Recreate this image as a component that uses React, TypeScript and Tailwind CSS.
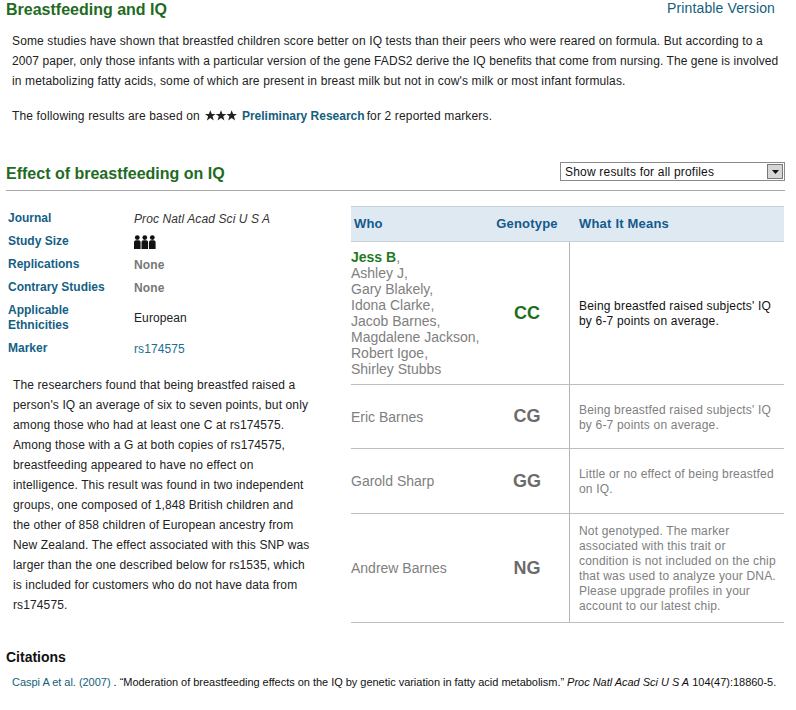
const font = "font-['Liberation_Sans',Arial,sans-serif]";

const details = [
  { label: ['Journal'], value: <span className="italic text-[#333333]">Proc Natl Acad Sci U S A</span>, h: 'h-[23px]' },
  { label: ['Study Size'], value: <People />, h: 'h-[23px]' },
  { label: ['Replications'], value: <span className="font-bold text-[#777777]">None</span>, h: 'h-[23px]' },
  { label: ['Contrary Studies'], value: <span className="font-bold text-[#777777]">None</span>, h: 'h-[23px]' },
  { label: ['Applicable', 'Ethnicities'], value: <span className="text-[#222222]">European</span>, h: 'h-[38px]' },
  { label: ['Marker'], value: <span className="text-[#1b6f8f]">rs174575</span>, h: 'h-[23px]' },
];

const rows = [
  {
    names: ['Ashley J,', 'Gary Blakely,', 'Idona Clarke,', 'Jacob Barnes,', 'Magdalene Jackson,', 'Robert Igoe,', 'Shirley Stubbs'],
    genotype: 'CC',
    meaning: ["Being breastfed raised subjects' IQ", 'by 6-7 points on average.'],
    h: 'h-[143px]',
    active: true,
  },
  { names: ['Eric Barnes'], genotype: 'CG', meaning: ["Being breastfed raised subjects' IQ", 'by 6-7 points on average.'], h: 'h-[64px]' },
  { names: ['Garold Sharp'], genotype: 'GG', meaning: ['Little or no effect of being breastfed', 'on IQ.'], h: 'h-[65px]' },
  {
    names: ['Andrew Barnes'],
    genotype: 'NG',
    meaning: ['Not genotyped. The marker', 'associated with this trait or', 'condition is not included on the chip', 'that was used to analyze your DNA.', 'Please upgrade profiles in your', 'account to our latest chip.'],
    h: 'h-[109px]',
  },
];

function People() {
  return (
    <svg width="22" height="14" viewBox="0 0 22 14" fill="#111111" className="block">
      {[0, 7.5, 15].map((x) => (
        <g key={x} transform={`translate(${x} 0)`}>
          <circle cx="3.3" cy="2.6" r="2.4" />
          <path d="M0 14V7.5C0 6 1 5.3 2 5.3h2.6c1 0 2 .7 2 2.2V14z" />
        </g>
      ))}
    </svg>
  );
}

function Stars() {
  return (
    <svg width="32" height="11" viewBox="0 0 33 11" fill="#222222" className="mx-[5px] -mt-[2px] block">
      {[0, 11, 22].map((x) => (
        <polygon key={x} transform={`translate(${x} 0)`} points="5.5,0 7,3.9 11,3.9 7.8,6.4 9,10.6 5.5,8 2,10.6 3.2,6.4 0,3.9 4,3.9" />
      ))}
    </svg>
  );
}

export default function App() {
  return (
    <div className={`${font} h-[710px] w-[796px] overflow-hidden bg-white text-[12px] text-[#222222]`}>
      <div className="flex h-[20px] items-start justify-between pt-px pl-[6px] pr-[21px]">
        <h1 className="text-[16px] leading-[18px] font-bold text-[#1f6b1f]">Breastfeeding and IQ</h1>
        <a className="-mt-px text-[14px] leading-[17px] tracking-[0.12px] text-[#14607c]">Printable Version</a>
      </div>

      <div className="pt-[11px] pl-[12px] text-[12px] leading-[20px]">
        <p className="tracking-[0.13px] whitespace-nowrap">Some studies have shown that breastfed children score better on IQ tests than their peers who were reared on formula. But according to a</p>
        <p className="tracking-[0.085px] whitespace-nowrap">2007 paper, only those infants with a particular version of the gene FADS2 derive the IQ benefits that come from nursing. The gene is involved</p>
        <p className="tracking-[0.135px] whitespace-nowrap">in metabolizing fatty acids, some of which are present in breast milk but not in cow's milk or most infant formulas.</p>
        <p className="mt-[15px] flex items-center tracking-[0.15px] whitespace-nowrap">
          The following results are based on
          <Stars />
          <a className="font-bold tracking-normal text-[#14607c]">Preliminary Research</a>
          <span className="ml-[2px]">for 2 reported markers.</span>
        </p>
      </div>

      <div className="mt-[35px] ml-[6px] flex h-[30px] w-[779px] items-center justify-between border-b border-[#a8a8a8] pb-[4px]">
        <h2 className="text-[16px] font-bold text-[#1f6b1f]">Effect of breastfeeding on IQ</h2>
        <div className="mb-[4px] flex h-[19px] w-[225px] items-center justify-between border border-[#8a8a8a] pr-px pl-[4px] text-[12px] tracking-[0.2px] text-[#111111]">
          Show results for all profiles
          <span className="flex h-[15px] w-[16px] items-center justify-center border border-[#777777] bg-[#d6d6d6]">
            <svg width="7" height="4" viewBox="0 0 7 4"><path d="M0 0h7L3.5 4z" fill="#111111" /></svg>
          </span>
        </div>
      </div>

      <div className="mt-[16px] flex items-start">
        <div className="w-[351px] shrink-0 pl-[8px]">
          <div>
            {details.map((d) => (
              <div key={d.label[0]} className={`flex items-center ${d.h}`}>
                <div className="w-[126px] text-[12px] leading-[15px] font-bold text-[#155f85]">
                  {d.label.map((l) => (
                    <div key={l}>{l}</div>
                  ))}
                </div>
                <div className="tracking-[0.1px]">{d.value}</div>
              </div>
            ))}
          </div>
          <div className="mt-[15px] pl-[5px] text-[12px] leading-[20px] tracking-[0.12px] whitespace-nowrap">
            <p>The researchers found that being breastfed raised a</p>
            <p>person's IQ an average of six to seven points, but only</p>
            <p>among those who had at least one C at rs174575.</p>
            <p>Among those with a G at both copies of rs174575,</p>
            <p>breastfeeding appeared to have no effect on</p>
            <p>intelligence. This result was found in two independent</p>
            <p>groups, one composed of 1,848 British children and</p>
            <p>the other of 858 children of European ancestry from</p>
            <p>New Zealand. The effect associated with this SNP was</p>
            <p>larger than the one described below for rs1535, which</p>
            <p>is included for customers who do not have data from</p>
            <p>rs174575.</p>
          </div>
        </div>

        <div className="-mt-px w-[433px] shrink-0">
          <div className="flex h-[36px] items-center border-y border-[#c8ced6] bg-[#dfe9f2] text-[13px] font-bold tracking-[0.2px] text-[#145a8c]">
            <div className="w-[135px] pl-[3px]">Who</div>
            <div className="w-[82px] text-center">Genotype</div>
            <div className="pl-[11px]">What It Means</div>
          </div>
          {rows.map((r) => (
            <div key={r.genotype} className={`flex border-b border-[#bdbdbd] ${r.h}`}>
              <div className="flex w-[146px] shrink-0 flex-col justify-center text-[14px] leading-[16px] text-[#808080]">
                {r.active && (
                  <div>
                    <span className="font-bold text-[#1f7a1f]">Jess B</span>,
                  </div>
                )}
                {r.names.map((n) => (
                  <div key={n}>{n}</div>
                ))}
              </div>
              <div className={`flex w-[72px] shrink-0 items-center justify-center pr-[12px] text-[18px] font-bold ${r.active ? 'text-[#1a6f1a]' : 'text-[#6b6b6b]'}`}>
                {r.genotype}
              </div>
              <div className={`flex flex-1 flex-col justify-center border-l border-[#b5b5b5] pt-[2px] pl-[9px] text-[12px] leading-[15px] tracking-[0.18px] whitespace-nowrap ${r.active ? 'text-[#111111]' : 'text-[#808080]'}`}>
                {r.meaning.map((m) => (
                  <div key={m}>{m}</div>
                ))}
              </div>
            </div>
          ))}
        </div>
      </div>

      <h3 className="mt-[24px] pl-[6px] text-[14px] font-bold text-[#111111]">Citations</h3>
      <p className="mt-[6px] pl-[12px] text-[11px] tracking-[-0.025px] whitespace-nowrap text-[#111111]">
        <a className="text-[#14607c]">Caspi A et al. (2007)</a> . “Moderation of breastfeeding effects on the IQ by genetic variation in fatty acid metabolism.” <i>Proc Natl Acad Sci U S A</i> 104(47):18860-5.
      </p>
    </div>
  );
}
